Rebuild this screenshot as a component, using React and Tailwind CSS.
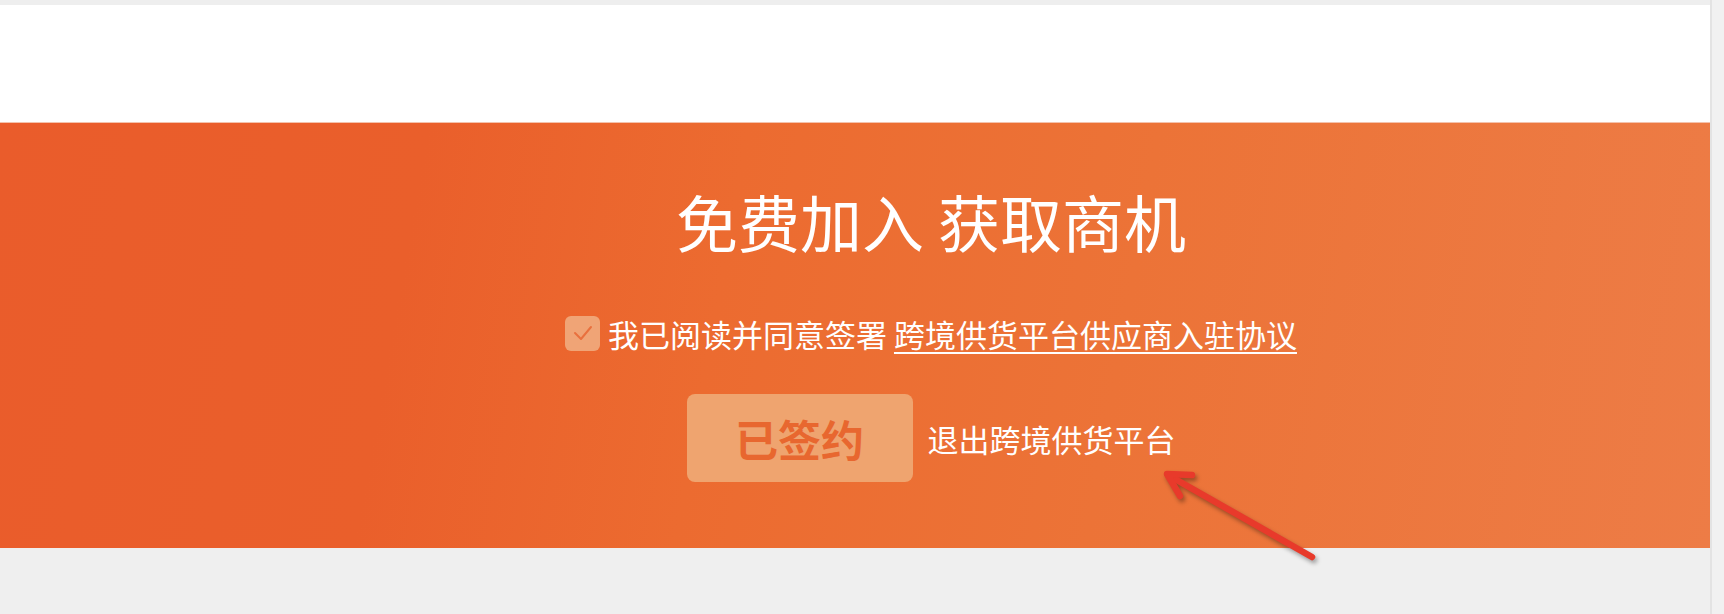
import React from "react";

function Arrow() {
  return (
    <svg
      className="absolute left-[1150px] top-[458px] pointer-events-none"
      width="185"
      height="115"
      viewBox="0 0 185 115"
      style={{ filter: "drop-shadow(2px 3px 2px rgba(0,0,0,0.35))" }}
    >
      <g stroke="#e83a2b" strokeWidth="6.5" strokeLinecap="round" strokeLinejoin="round" fill="none">
        <line x1="162" y1="99" x2="18" y2="17" />
        <polyline points="42,17 17,16 30,38" />
      </g>
    </svg>
  );
}

export default function App() {
  return (
    <div
      className="relative flex w-[1724px] h-[614px] bg-[#efefef] overflow-hidden"
      style={{ fontFamily: '"Noto Sans CJK SC", "Noto Sans", sans-serif' }}
    >
      <div className="flex flex-col w-[1710px]">
        <div className="h-[5px] bg-[#eeeeee]" />
        <div className="h-[118px] bg-white border-b border-[#f4c2ac]" />
        <div className="h-[425px] pl-[152px] flex flex-col items-center bg-[linear-gradient(100deg,#ea5c2b_0%,#ea5f2b_24%,#ec6b30_42%,#ec7337_65%,#ed7c46_100%)]">
          <h1 className="mt-[67px] h-[62px] text-[62px] leading-none text-white font-normal">
            免费加入 获取商机
          </h1>
          <div className="mt-[64px] h-[34px] flex items-center gap-[8px] text-[31px] leading-none text-white">
            <span className="w-[35px] h-[35px] rounded-[6px] bg-[#f0a476] flex items-center justify-center">
              <svg width="20" height="16" viewBox="0 0 20 16" fill="none">
                <polyline points="2,8 8,14 18,2" stroke="#e9703e" strokeWidth="2" strokeLinecap="round" strokeLinejoin="round" />
              </svg>
            </span>
            <span>
              我已阅读并同意签署{" "}
              <span className="underline decoration-[2px] underline-offset-[5px]">跨境供货平台供应商入驻协议</span>
            </span>
          </div>
          <div className="mt-[44px] flex items-center gap-[15px]">
            <div className="w-[226px] h-[88px] rounded-[8px] bg-[#efa46f] flex items-center justify-center text-[43px] font-bold text-[#e8672f] leading-none">
              已签约
            </div>
            <span className="text-[31px] leading-none text-white">退出跨境供货平台</span>
          </div>
        </div>
        <div className="flex-1 bg-[#efefef]" />
      </div>
      <div className="w-[14px] border-l-2 border-[#e3e3e3] bg-[#f1f1f1]" />
      <Arrow />
    </div>
  );
}
